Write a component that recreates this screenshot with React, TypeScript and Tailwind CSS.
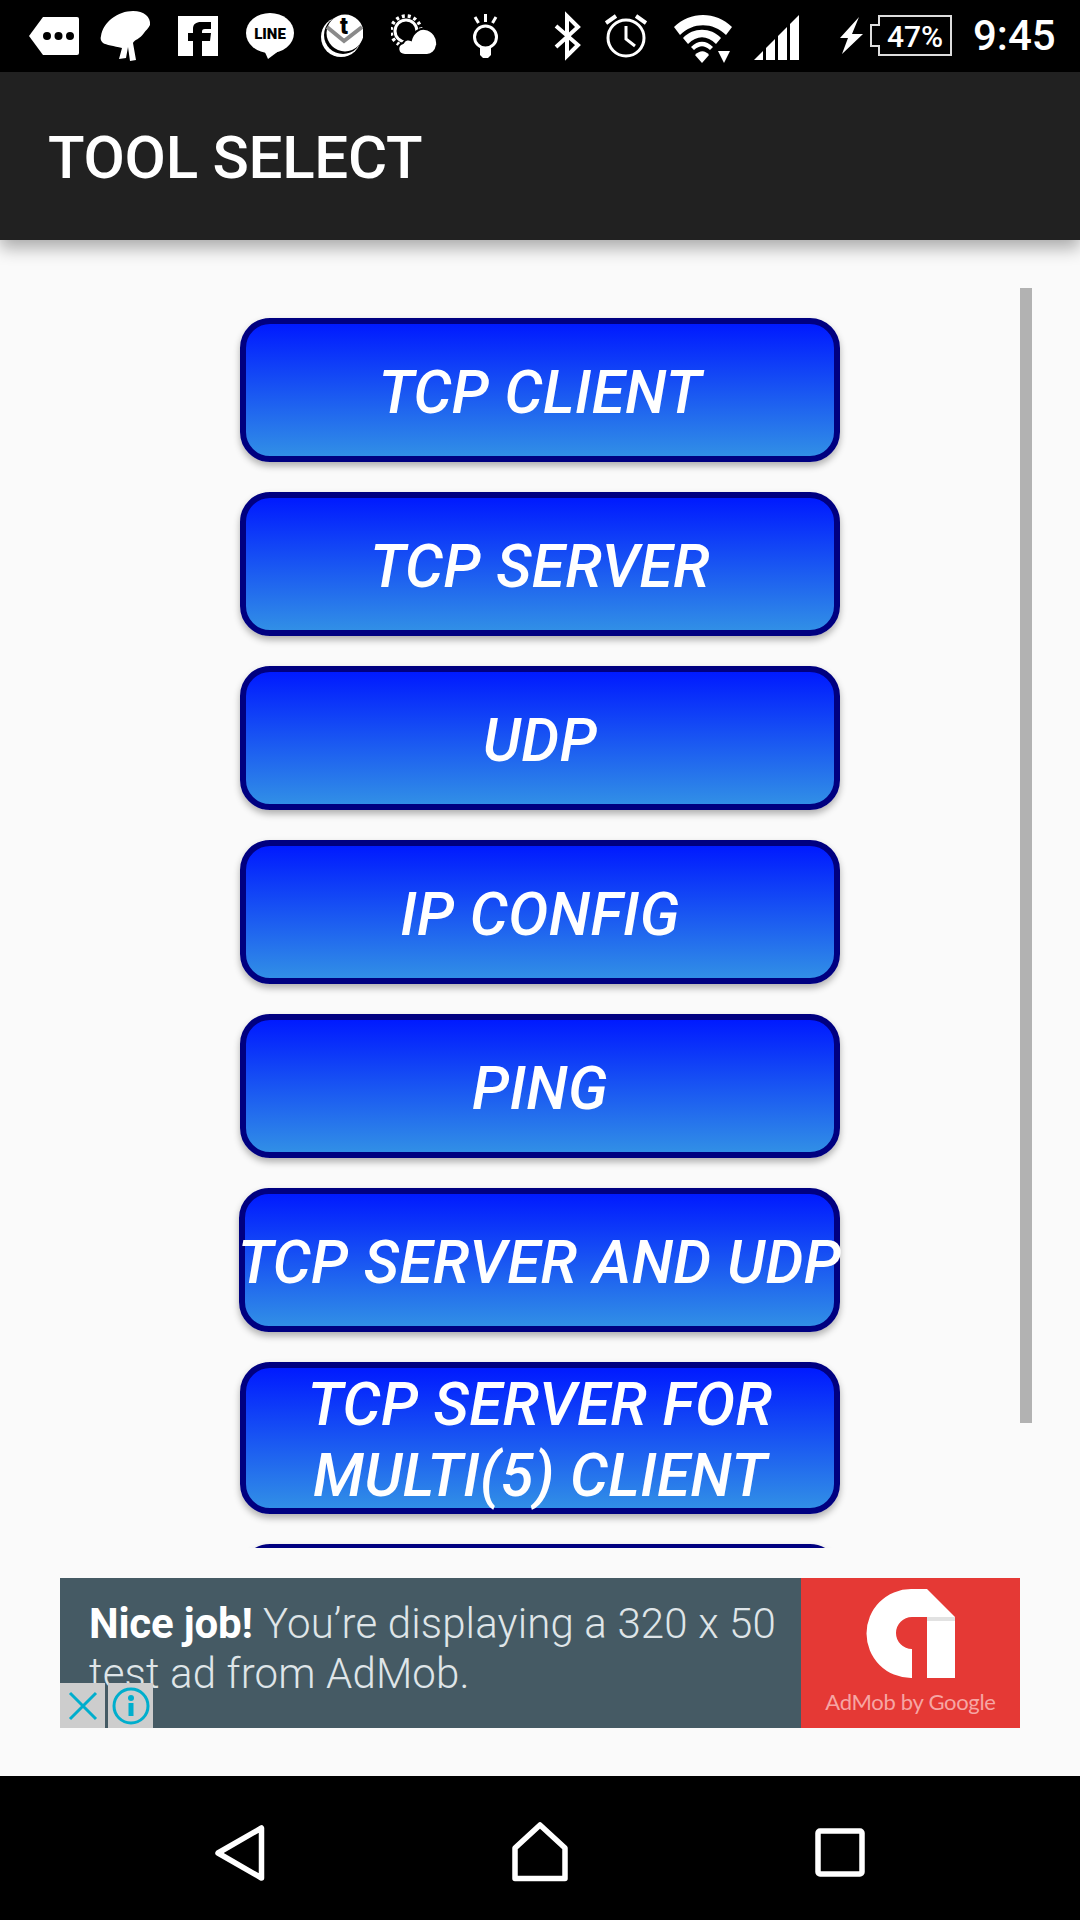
const tools = [
  { label: 'TCP CLIENT', size: 'w-[600px] h-[144px]' },
  { label: 'TCP SERVER', size: 'w-[600px] h-[144px]' },
  { label: 'UDP', size: 'w-[600px] h-[144px]' },
  { label: 'IP CONFIG', size: 'w-[600px] h-[144px]' },
  { label: 'PING', size: 'w-[600px] h-[144px]' },
  { label: 'TCP SERVER AND UDP', size: 'w-[601px] h-[144px] -ml-px whitespace-nowrap' },
  { label: 'TCP SERVER FOR MULTI(5) CLIENT', size: 'w-[600px] h-[152px]' },
  { label: '', size: 'w-[600px] h-[144px]' },
];

function StatusBar() {
  return (
    <div className="h-[72px] bg-black flex items-center text-white shrink-0 pl-[29px]">
      {/* more notifications tag */}
      <svg width="50" height="72" viewBox="0 0 50 72">
        <path d="M14 17H48Q50 17 50 19V53Q50 55 48 55H14L0 36Z" fill="#fff" />
        <circle cx="18" cy="36" r="4" fill="#000" />
        <circle cx="29.5" cy="36" r="4" fill="#000" />
        <circle cx="41" cy="36" r="4" fill="#000" />
      </svg>
      {/* brain tree */}
      <svg className="ml-[21px]" width="51" height="72" viewBox="0 0 51 72">
        <path d="M1 36C3 22 18 11 33 11C44 11 51 17 50 25C48 29 46 30 44 33C40 39 34 40 33 43L36 60L30 61L28 47L26 58L19 59L22 48C14 46 6 45 3 43C1 41 0 39 1 36Z" fill="#fff" />
      </svg>
      {/* facebook */}
      <svg className="ml-[27px]" width="40" height="72" viewBox="0 0 40 72">
        <rect x="0" y="16" width="40" height="40" fill="#fff" />
        <path d="M15 56V41H10V33H15V29C15 24 18 22 23 22H33V29H27C24.5 29 24 30 24 32V33H33L32 41H24V56Z" fill="#000" />
      </svg>
      {/* line */}
      <svg className="ml-[28px]" width="48" height="72" viewBox="0 0 48 72">
        <ellipse cx="24" cy="33" rx="24" ry="20" fill="#fff" />
        <path d="M18 50L34 50L22 59Z" fill="#fff" />
        <text x="24" y="39" textAnchor="middle" fontFamily="Roboto" fontWeight="900" fontSize="15" fill="#000">LINE</text>
      </svg>
      {/* t mail */}
      <svg className="ml-[27px]" width="42" height="72" viewBox="0 0 42 72">
        <circle cx="20" cy="37" r="20" fill="#fff" />
        <circle cx="22" cy="35" r="19" fill="#000" />
        <circle cx="24" cy="33" r="18.5" fill="#fff" />
        <path d="M6 27L23 41L41 27" fill="none" stroke="#8a8a8a" strokeWidth="4" />
        <text x="23" y="34" textAnchor="middle" fontFamily="Roboto" fontWeight="900" fontSize="23" fill="#000">t</text>
      </svg>
      {/* partly cloudy */}
      <svg className="ml-[28px]" width="46" height="72" viewBox="0 0 46 72">
        <circle cx="15" cy="31" r="15" fill="none" stroke="#fff" strokeWidth="3.5" strokeDasharray="3 3" />
        <circle cx="15" cy="31" r="11" fill="#000" stroke="#fff" strokeWidth="3" />
        <path d="M14 55C6 55 5 45 12 43C14 39 18 39 20 40C22 32 29 28 34 29C42 30 47 38 46 45C45 51 41 55 36 55Z" fill="#fff" stroke="#000" strokeWidth="2" />
      </svg>
      {/* bulb */}
      <svg className="ml-[35px]" width="27" height="72" viewBox="0 0 27 72">
        <circle cx="13.5" cy="37" r="11" fill="none" stroke="#fff" strokeWidth="3" />
        <path d="M8 47H19V55L16 58H11L8 55Z" fill="#fff" />
        <path d="M13.5 14V22M3 17L6.5 23M24 17L20.5 23" stroke="#fff" strokeWidth="3" fill="none" />
      </svg>
      {/* bluetooth */}
      <svg className="ml-[55px]" width="27" height="72" viewBox="0 0 27 72">
        <path d="M2 26L24 45L13 56V16L24 27L2 47" fill="none" stroke="#fff" strokeWidth="4" />
      </svg>
      {/* alarm */}
      <svg className="ml-[24px]" width="42" height="72" viewBox="0 0 42 72">
        <circle cx="21" cy="38" r="18" fill="none" stroke="#fff" strokeWidth="3" />
        <path d="M21 26V39L30 46" fill="none" stroke="#fff" strokeWidth="3" />
        <path d="M1 23L11 16M41 23L31 16" fill="none" stroke="#fff" strokeWidth="4" />
      </svg>
      {/* wifi */}
      <svg className="ml-[27px]" width="58" height="72" viewBox="0 0 58 72">
        <path d="M0 27C16 11 42 11 58 27L52 35C39 22 19 22 6 35Z" fill="#fff" />
        <path d="M9 38C19 27 37 27 47 38L42 44C33 35 23 35 14 44Z" fill="#fff" />
        <path d="M17 47C24 40 32 40 39 47L36 50C30 45 26 45 20 50Z" fill="#fff" />
        <path d="M21 55C26 50 31 50 35 55L28 63Z" fill="#fff" />
        <path d="M44 51H56L50 63Z" fill="#fff" />
      </svg>
      {/* signal */}
      <svg className="ml-[22px]" width="45" height="72" viewBox="0 0 45 72">
        <path d="M0 60L9 51V60Z" fill="#fff" />
        <path d="M12 48L21 39V60H12Z" fill="#fff" />
        <path d="M24 36L33 27V60H24Z" fill="#fff" />
        <path d="M36 24L45 15V60H36Z" fill="#fff" />
      </svg>
      {/* bolt */}
      <svg className="ml-[41px]" width="23" height="72" viewBox="0 0 23 72">
        <path d="M19 17L12 34H23L2 54L8 38H0Z" fill="#fff" />
      </svg>
      {/* battery */}
      <svg className="ml-[7px]" width="82" height="72" viewBox="0 0 82 72">
        <path d="M9 16H81V55H9V46H1V25H9Z" fill="none" stroke="#ddd" strokeWidth="2" />
        <text x="45" y="47" textAnchor="middle" fontFamily="Roboto" fontWeight="500" fontSize="30" fill="#fff">47%</text>
      </svg>
      <span className="ml-[21px] text-[42px] font-medium leading-none">9:45</span>
    </div>
  );
}

function NavBar() {
  return (
    <div className="h-[144px] bg-black grid grid-cols-3 place-items-center px-[90px] pt-[8px] shrink-0">
      <svg width="52" height="60" viewBox="0 0 52 60">
        <path d="M47.5 6V56L4 31Z" fill="none" stroke="#fff" strokeWidth="5.5" strokeLinejoin="round" />
      </svg>
      <svg width="60" height="60" viewBox="0 0 60 60">
        <path d="M30 3L55 26V56.5H5V26Z" fill="none" stroke="#fff" strokeWidth="5.5" strokeLinejoin="round" />
      </svg>
      <svg width="50" height="50" viewBox="0 0 50 50">
        <rect x="3" y="4" width="44" height="43" rx="2" fill="none" stroke="#fff" strokeWidth="5.5" />
      </svg>
    </div>
  );
}

function AdBanner() {
  return (
    <div className="relative h-[150px] w-[960px] mx-auto mt-[30px] flex shrink-0 overflow-hidden">
      <div className="w-[741px] bg-[#455a64] pl-[29px] pt-[21px] text-[42px] leading-[50px] font-light tracking-[0.15px] text-[#dfe5e8]">
        <span className="font-bold text-white tracking-[-0.2px]">Nice job!</span> You’re displaying a 320 x 50 test ad from AdMob.
      </div>
      <div className="w-[219px] bg-[#e53935] flex flex-col items-center">
        <svg className="mt-[10px]" width="219" height="92" viewBox="0 10 219 92">
          <path d="M110 100A44.5 44.5 0 0 1 110 11H126L154 39V100H126V39H111A16 16 0 0 0 111 71V100Z" fill="#fff" />
          <path d="M126 39H154V43H126Z" fill="#e2e2e2" />
        </svg>
        <span className="mt-[8px] text-[22px] leading-[28px] tracking-[-0.3px] font-['Lato',sans-serif] text-[#f6a6a4]">AdMob by Google</span>
      </div>
      {/* close and info buttons sit on top of the creative */}
      <div className="absolute left-0 bottom-0 h-[45px] flex">
        <div className="w-[45px] bg-[#cdcdcd] flex items-center justify-center">
          <svg width="30" height="30" viewBox="0 0 30 30">
            <path d="M2 2L28 28M28 2L2 28" stroke="#00aecd" strokeWidth="3" />
          </svg>
        </div>
        <div className="w-[45px] ml-[3px] bg-[#cdcdcd] flex items-center justify-center">
          <svg width="38" height="38" viewBox="0 0 38 38">
            <circle cx="19" cy="19" r="17" fill="none" stroke="#00aecd" strokeWidth="3" />
            <circle cx="19" cy="11" r="3" fill="#00aecd" />
            <rect x="16.5" y="16" width="5" height="13" fill="#00aecd" />
          </svg>
        </div>
      </div>
    </div>
  );
}

export default function App() {
  return (
    <div className="w-[1080px] h-[1920px] flex flex-col bg-[#fafafa] font-[Roboto,sans-serif] overflow-hidden">
      <StatusBar />
      <div className="relative z-10 h-[168px] bg-[#212121] flex items-center pl-[48px] pt-[4px] shrink-0 shadow-[0_8px_16px_rgba(0,0,0,0.32)]">
        <h1 className="text-[60px] font-medium tracking-[-0.25px] text-white leading-none">TOOL SELECT</h1>
      </div>
      <div className="flex-1 min-h-0 flex flex-col pt-[48px]">
        <div className="relative h-[1260px] shrink-0 overflow-hidden">
          <div className="flex flex-col gap-[30px] pt-[30px] pl-[240px]">
            {tools.map((tool, i) => (
              <button
                key={i}
                className={`${tool.size} shrink-0 rounded-[30px] border-[6px] border-[#000080] bg-linear-to-b/srgb from-[#001aff] to-[#318fe6] flex items-center justify-center text-center text-[60px] leading-[71px] pt-[4px] italic font-medium tracking-[0.4px] text-white shadow-[0_4px_7px_rgba(0,0,0,0.3)]`}
              >
                {tool.label}
              </button>
            ))}
          </div>
          {/* scrollbar thumb */}
          <div className="absolute left-[1020px] top-0 w-[12px] h-[1135px] bg-[#b2b2b2]" />
        </div>
        <AdBanner />
      </div>
      <NavBar />
    </div>
  );
}
